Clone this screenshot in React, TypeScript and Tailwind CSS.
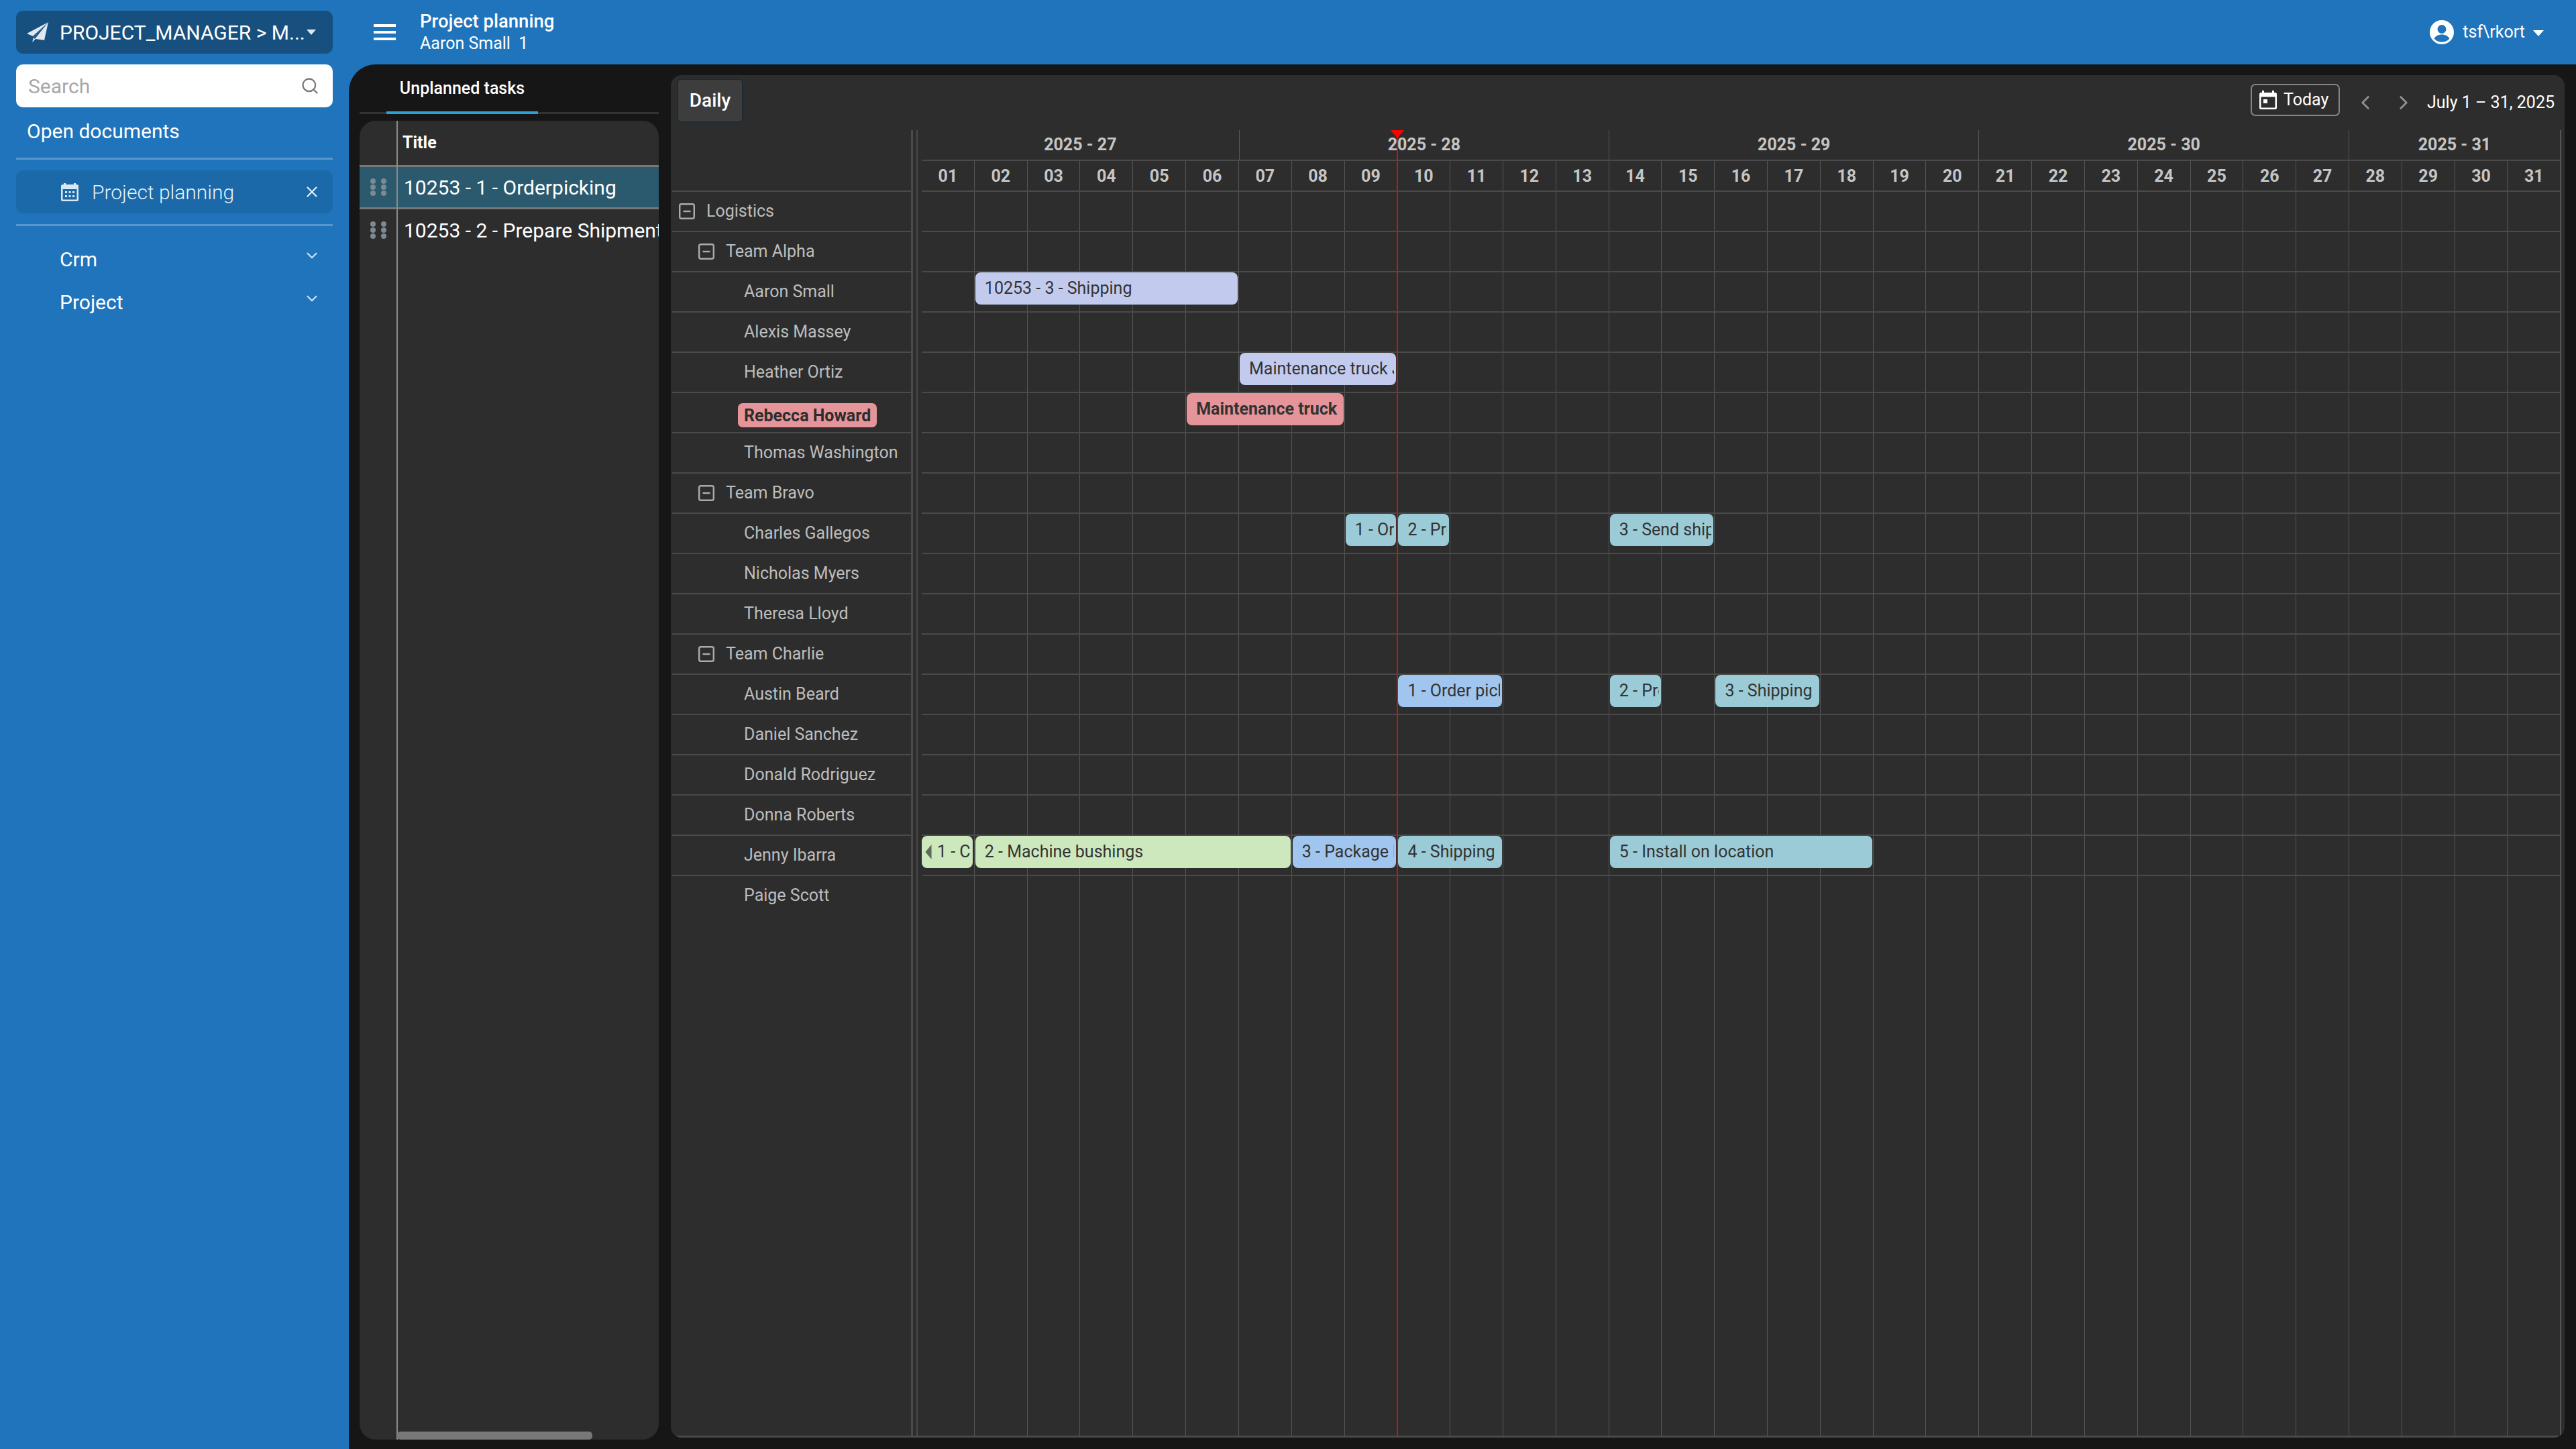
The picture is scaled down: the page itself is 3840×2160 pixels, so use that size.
import { ChevronDown, ChevronLeft, ChevronRight, Search, X } from 'lucide-react';

const DAY_W = 78.83;
const DAYS = Array.from({ length: 31 }, (_, i) => String(i + 1).padStart(2, '0'));

const WEEKS = [
  { label: '2025 - 27', days: 6 },
  { label: '2025 - 28', days: 7 },
  { label: '2025 - 29', days: 7 },
  { label: '2025 - 30', days: 7 },
  { label: '2025 - 31', days: 4 },
];

const WEEK_STARTS = new Set([6, 13, 20, 27]);

type Bar = { from: number; to: number; text: string; color: string; bold?: boolean; arrow?: boolean };
type Row = { name: string; level: 0 | 1 | 2; alert?: boolean; bars?: Bar[] };

const LILAC = 'bg-[#c2cbee]';
const RED = 'bg-[#e59599]';
const TEAL = 'bg-[#9bcbd6]';
const BLUE = 'bg-[#a0c5ef]';
const GREEN = 'bg-[#cde8bd]';

const ROWS: Row[] = [
  { name: 'Logistics', level: 0 },
  { name: 'Team Alpha', level: 1 },
  { name: 'Aaron Small', level: 2, bars: [{ from: 1, to: 6, text: '10253 - 3 - Shipping', color: LILAC }] },
  { name: 'Alexis Massey', level: 2 },
  { name: 'Heather Ortiz', level: 2, bars: [{ from: 6, to: 9, text: 'Maintenance truck Jones', color: LILAC }] },
  {
    name: 'Rebecca Howard',
    level: 2,
    alert: true,
    bars: [{ from: 5, to: 8, text: 'Maintenance truck Volvo', color: RED, bold: true }],
  },
  { name: 'Thomas Washington', level: 2 },
  { name: 'Team Bravo', level: 1 },
  {
    name: 'Charles Gallegos',
    level: 2,
    bars: [
      { from: 8, to: 9, text: '1 - Order picking', color: TEAL },
      { from: 9, to: 10, text: '2 - Prepare', color: TEAL },
      { from: 13, to: 15, text: '3 - Send shipment', color: TEAL },
    ],
  },
  { name: 'Nicholas Myers', level: 2 },
  { name: 'Theresa Lloyd', level: 2 },
  { name: 'Team Charlie', level: 1 },
  {
    name: 'Austin Beard',
    level: 2,
    bars: [
      { from: 9, to: 11, text: '1 - Order picking', color: BLUE },
      { from: 13, to: 14, text: '2 - Prepare', color: TEAL },
      { from: 15, to: 17, text: '3 - Shipping', color: TEAL },
    ],
  },
  { name: 'Daniel Sanchez', level: 2 },
  { name: 'Donald Rodriguez', level: 2 },
  { name: 'Donna Roberts', level: 2 },
  {
    name: 'Jenny Ibarra',
    level: 2,
    bars: [
      { from: 0, to: 1, text: '1 - Cutting', color: GREEN, arrow: true },
      { from: 1, to: 7, text: '2 - Machine bushings', color: GREEN },
      { from: 7, to: 9, text: '3 - Package bushings', color: BLUE },
      { from: 9, to: 11, text: '4 - Shipping', color: TEAL },
      { from: 13, to: 18, text: '5 - Install on location', color: TEAL },
    ],
  },
  { name: 'Paige Scott', level: 2 },
];

function DayCells() {
  return (
    <div className="absolute inset-0 flex">
      {DAYS.map((d, i) => (
        <div key={d} className={i === 0 ? 'flex-1' : 'flex-1 border-l border-[#565656]'} />
      ))}
    </div>
  );
}

function CollapseIcon() {
  return (
    <svg viewBox="0 0 24 24" className="h-[24px] w-[24px] shrink-0 text-[#ababab]" fill="none" stroke="currentColor">
      <rect x="1.2" y="1.2" width="21.6" height="21.6" rx="2.5" strokeWidth="2.4" />
      <path d="M6.5 12h11" strokeWidth="2.4" />
    </svg>
  );
}

function ResourceRow({ row }: { row: Row }) {
  return (
    <div className="flex h-[60px] items-center border-t-2 border-[#4a4a4a] text-[25px] text-[#bdbdbd]">
      {row.level === 0 && (
        <div className="flex items-center gap-[17px] pl-[10px]">
          <CollapseIcon />
          <span>{row.name}</span>
        </div>
      )}
      {row.level === 1 && (
        <div className="flex items-center gap-[17px] pl-[39px]">
          <CollapseIcon />
          <span>{row.name}</span>
        </div>
      )}
      {row.level === 2 &&
        (row.alert ? (
          <span className="ml-[98px] mt-[8px] flex h-[36px] items-center rounded-[7px] bg-[#e59599] px-[9px] font-bold leading-none text-[#2d2d2d]">
            {row.name}
          </span>
        ) : (
          <span className="pl-[107px]">{row.name}</span>
        ))}
    </div>
  );
}

function TimelineBar({ bar }: { bar: Bar }) {
  const left = bar.from * DAY_W + (bar.from === 0 ? 0 : 1);
  const width = (bar.to - bar.from) * DAY_W - (bar.from === 0 ? 3 : 3);
  return (
    <div
      className={`absolute top-0 flex h-[48px] items-center rounded-[8px] pl-[14px] pr-[3px] text-[25px] text-[#333333] ${bar.color} ${
        bar.bold ? 'font-bold' : ''
      }`}
      style={{ left, width }}
    >
      {bar.arrow && (
        <svg viewBox="0 0 10 24" className="mr-[8px] h-[22px] w-[10px] shrink-0 -ml-[9px] fill-[#5f6a5a]">
          <path d="M10 0v24L0 12z" />
        </svg>
      )}
      <span className="overflow-hidden whitespace-nowrap">{bar.text}</span>
    </div>
  );
}

function TimelineRow({ row }: { row: Row }) {
  return (
    <div className="relative h-[60px] border-t-2 border-[#4a4a4a]">
      {row.bars?.map((b) => (
        <TimelineBar key={b.text} bar={b} />
      ))}
    </div>
  );
}

function DragHandle() {
  return (
    <div className="grid w-[55px] shrink-0 grid-cols-[8px_8px] justify-center gap-x-[8px] gap-y-[1px]">
      {Array.from({ length: 6 }).map((_, i) => (
        <span key={i} className="h-[8px] w-[8px] rounded-full bg-[#7d8a90]" />
      ))}
    </div>
  );
}

function Sidebar() {
  return (
    <aside className="flex w-[520px] shrink-0 flex-col px-[24px] pt-[16px] text-white">
      <div className="flex h-[64px] items-center rounded-[10px] bg-[#17507f] pl-[16px] pr-[25px]">
        <svg viewBox="0 0 32 31" className="h-[31px] w-[32px] shrink-0">
          <path d="M32 0 0 17l9 4z" fill="#dfe8f0" />
          <path d="M32 0 10 23l-2 7 5-5 13 2z" fill="#dfe8f0" />
          <path d="M32 0 10 23l2 2z" fill="#17507f" />
        </svg>
        <span className="ml-[17px] flex-1 whitespace-nowrap text-[30px]">PROJECT_MANAGER &gt; M...</span>
        <span className="h-0 w-0 border-x-[7px] border-t-[8px] border-x-transparent border-t-[#dfe8f0]" />
      </div>

      <div className="mt-[16px] flex h-[64px] items-center rounded-[10px] bg-white pl-[18px] pr-[20px]">
        <span className="flex-1 text-[30px] text-[#a8a8a8]">Search</span>
        <Search className="h-[28px] w-[28px] text-[#7a7a7a]" strokeWidth={2} />
      </div>

      <div className="mt-[16px] pl-[16px] text-[30px] leading-[40px]">Open documents</div>

      <div className="mt-[19px] h-[3px] bg-white/25" />

      <div className="mt-[16px] flex h-[64px] items-center rounded-[10px] bg-[#1b69a8] pl-[67px] pr-[18px]">
        <svg viewBox="0 0 26 28" className="h-[28px] w-[26px] shrink-0 fill-[#d9e8f5]">
          <path d="M4 1h3v2h12V1h3v2h1.5A2.5 2.5 0 0 1 26 5.500v20a2.500 2.500 0 0 1-2.500 2.500h-21A2.500 2.500 0 0 1 0 25.500v-20A2.500 2.500 0 0 1 2.500 3H4zM2.500 10v15.500h21V10z" />
          <path d="M6 13h3v3H6zm5.500 0h3v3h-3zm5.500 0h3v3h-3zM6 19h3v3H6zm5.500 0h3v3h-3zm5.500 0h3v3h-3z" />
        </svg>
        <span className="ml-[20px] flex-1 text-[30px] font-light text-[#e6f1fa]">Project planning</span>
        <X className="h-[26px] w-[26px] text-[#e6f1fa]" strokeWidth={2} />
      </div>

      <div className="mt-[16px] h-[3px] bg-white/25" />

      <div className="mt-[17px] flex h-[64px] items-center pl-[65px] pr-[18px] text-[30px]">
        <span className="flex-1">Crm</span>
        <ChevronDown className="-mt-[10px] h-[26px] w-[26px] text-[#cfe3f4]" strokeWidth={2} />
      </div>
      <div className="flex h-[64px] items-center pl-[65px] pr-[18px] text-[30px]">
        <span className="flex-1">Project</span>
        <ChevronDown className="-mt-[10px] h-[26px] w-[26px] text-[#cfe3f4]" strokeWidth={2} />
      </div>
    </aside>
  );
}

function TopBar() {
  return (
    <header className="flex h-[96px] shrink-0 items-center text-white">
      <div className="ml-[37px] flex w-[33px] flex-col gap-[6px]">
        <span className="h-[4px] bg-white" />
        <span className="h-[4px] bg-white" />
        <span className="h-[4px] bg-white" />
      </div>
      <div className="ml-[36px] flex flex-col">
        <span className="text-[27.500px] font-medium leading-[33px]">Project planning</span>
        <span className="text-[25px] leading-[33px]">
          Aaron Small <span className="ml-[6px]">1</span>
        </span>
      </div>
      <div className="ml-auto mr-[48px] flex items-center">
        <svg viewBox="0 0 36 36" className="h-[36px] w-[36px]">
          <circle cx="18" cy="18" r="18" fill="#ffffff" />
          <circle cx="18" cy="13.500" r="6.500" fill="#1f74bb" />
          <path d="M6.500 27.500C9 23 14 21.500 18 21.500s9 1.500 11.500 6A14.500 14.500 0 0 1 18 32.500a14.500 14.500 0 0 1-11.500-5z" fill="#1f74bb" />
        </svg>
        <span className="ml-[13px] text-[25px]">tsf\rkort</span>
        <span className="ml-[12px] mt-[2px] h-0 w-0 border-x-[8px] border-t-[9px] border-x-transparent border-t-white" />
      </div>
    </header>
  );
}

function TaskPanel() {
  return (
    <section className="flex w-[446px] shrink-0 flex-col">
      <div className="mt-[0px] flex h-[74px] items-end border-b-[3px] border-[#333333] pl-[40px]">
        <div className="-mb-[3px] flex h-[74px] w-[226px] items-start justify-center border-b-[4px] border-[#2d9fd9] pt-[21px] text-[25px] font-medium leading-[30px] text-white">
          Unplanned tasks
        </div>
      </div>
      <div className="relative mt-[10px] flex flex-1 flex-col overflow-hidden rounded-[24px] bg-[#2d2d2d] text-white">
        <div className="flex h-[66px] shrink-0 items-center pl-[64px] text-[25px] font-bold">Title</div>
        <div className="flex h-[66px] items-center border-y-[3px] border-[#777777] bg-[#2b5a6e]">
          <DragHandle />
          <span className="ml-[11px] whitespace-nowrap text-[30px]">10253 - 1 - Orderpicking</span>
        </div>
        <div className="flex h-[62px] items-center">
          <DragHandle />
          <span className="ml-[11px] whitespace-nowrap text-[30px]">10253 - 2 - Prepare Shipment</span>
        </div>
        <div className="absolute bottom-0 left-[55px] top-0 w-[2px] bg-[#8a8a8a]" />
        <div className="absolute bottom-0 left-[56px] h-[12px] w-[291px] rounded-[5px] bg-[#787878]" />
      </div>
    </section>
  );
}

function GanttPanel() {
  return (
    <section className="flex min-w-0 flex-1 flex-col overflow-hidden rounded-[16px] bg-[#2d2d2d] text-[#bdbdbd]">
      <div className="flex h-[82px] shrink-0 items-center pl-[9px]">
        <div className="mt-[-6px] flex h-[66px] w-[99px] items-center justify-center rounded-[6px] border-2 border-[#1d2b36] bg-[#3d3d3d] text-[28px] font-medium text-white">
          Daily
        </div>
        <div className="ml-auto mr-[15px] flex items-center">
          <div className="mt-[-8px] flex h-[48px] w-[133px] items-center rounded-[7px] border-2 border-[#858585] pl-[11px] text-[25px] text-white">
            <svg viewBox="0 0 26 28" className="h-[28px] w-[26px] shrink-0 fill-white">
              <path d="M4 0h3v3h12V0h3v3h1.500A2.500 2.500 0 0 1 26 5.500v20a2.500 2.500 0 0 1-2.500 2.500h-21A2.500 2.500 0 0 1 0 25.500v-20A2.500 2.500 0 0 1 2.500 3H4zM2.500 9.500v16h21v-16z" />
              <path d="M6 13h6v6H6z" />
            </svg>
            <span className="ml-[10px] whitespace-nowrap">Today</span>
          </div>
          <ChevronLeft className="ml-[21px] h-[34px] w-[34px] text-[#8f8f8f]" strokeWidth={2} />
          <ChevronRight className="ml-[23px] h-[34px] w-[34px] text-[#8f8f8f]" strokeWidth={2} />
          <span className="ml-[18px] whitespace-nowrap text-[25px] text-white">July 1 – 31, 2025</span>
        </div>
      </div>

      <div className="flex min-h-0 flex-1 border-b-[3px] border-[#4a4a4a]">
        {/* resource column */}
        <div className="ml-[2px] flex w-[359px] shrink-0 flex-col border-r-[3px] border-[#4a4a4a]">
          <div className="h-[90px] shrink-0" />
          {ROWS.map((r) => (
            <ResourceRow key={r.name} row={r} />
          ))}
        </div>

        {/* splitter */}
        <div className="ml-[5px] w-[2px] shrink-0 bg-[#4a4a4a]" />

        {/* timeline */}
        <div className="relative ml-[6px] flex w-[2444px] shrink-0 flex-col border-r-2 border-[#565656]">
          <div className="flex h-[44px] shrink-0 text-[25px] font-bold leading-[44px] text-[#c5c5c5]">
            {WEEKS.map((w, i) => (
              <div
                key={w.label}
                className={i === 0 ? 'text-center' : 'border-l border-[#565656] text-center'}
                style={{ width: w.days * DAY_W }}
              >
                {w.label}
              </div>
            ))}
          </div>
          <div className="flex h-[46px] shrink-0 border-t-2 border-[#4a4a4a] text-[25px] font-bold leading-[46px] text-[#c5c5c5]">
            {DAYS.map((d, i) => (
              <div key={d} className={i === 0 ? 'flex-1 text-center' : 'flex-1 border-l border-[#565656] text-center'}>
                {d}
              </div>
            ))}
          </div>
          <div className="relative flex-1">
            <DayCells />
            <div className="relative">
              {ROWS.map((r) => (
                <TimelineRow key={r.name} row={r} />
              ))}
            </div>
          </div>
          {/* today marker */}
          <div className="absolute bottom-0 top-0 w-[2px] bg-[#c01818]" style={{ left: 9 * DAY_W - 1 }} />
          <div
            className="absolute top-0 h-0 w-0 border-x-[10px] border-t-[12px] border-x-transparent border-t-[#ff0000]"
            style={{ left: 9 * DAY_W - 10 }}
          />
          {WEEK_STARTS.size === 0 && null}
        </div>
      </div>
    </section>
  );
}

export default function App() {
  return (
    <div className="flex h-[2160px] w-[3840px] overflow-hidden bg-[#1f74bb] font-['Roboto',sans-serif]">
      <Sidebar />
      <div className="flex min-w-0 flex-1 flex-col">
        <TopBar />
        <main className="flex min-h-0 flex-1 gap-[18px] rounded-tl-[40px] bg-[#161616] pb-[14px] pl-[16px] pr-[17px]">
          <TaskPanel />
          <div className="flex min-w-0 flex-1 flex-col pb-[3px] pt-[16px]">
            <GanttPanel />
          </div>
        </main>
      </div>
    </div>
  );
}
